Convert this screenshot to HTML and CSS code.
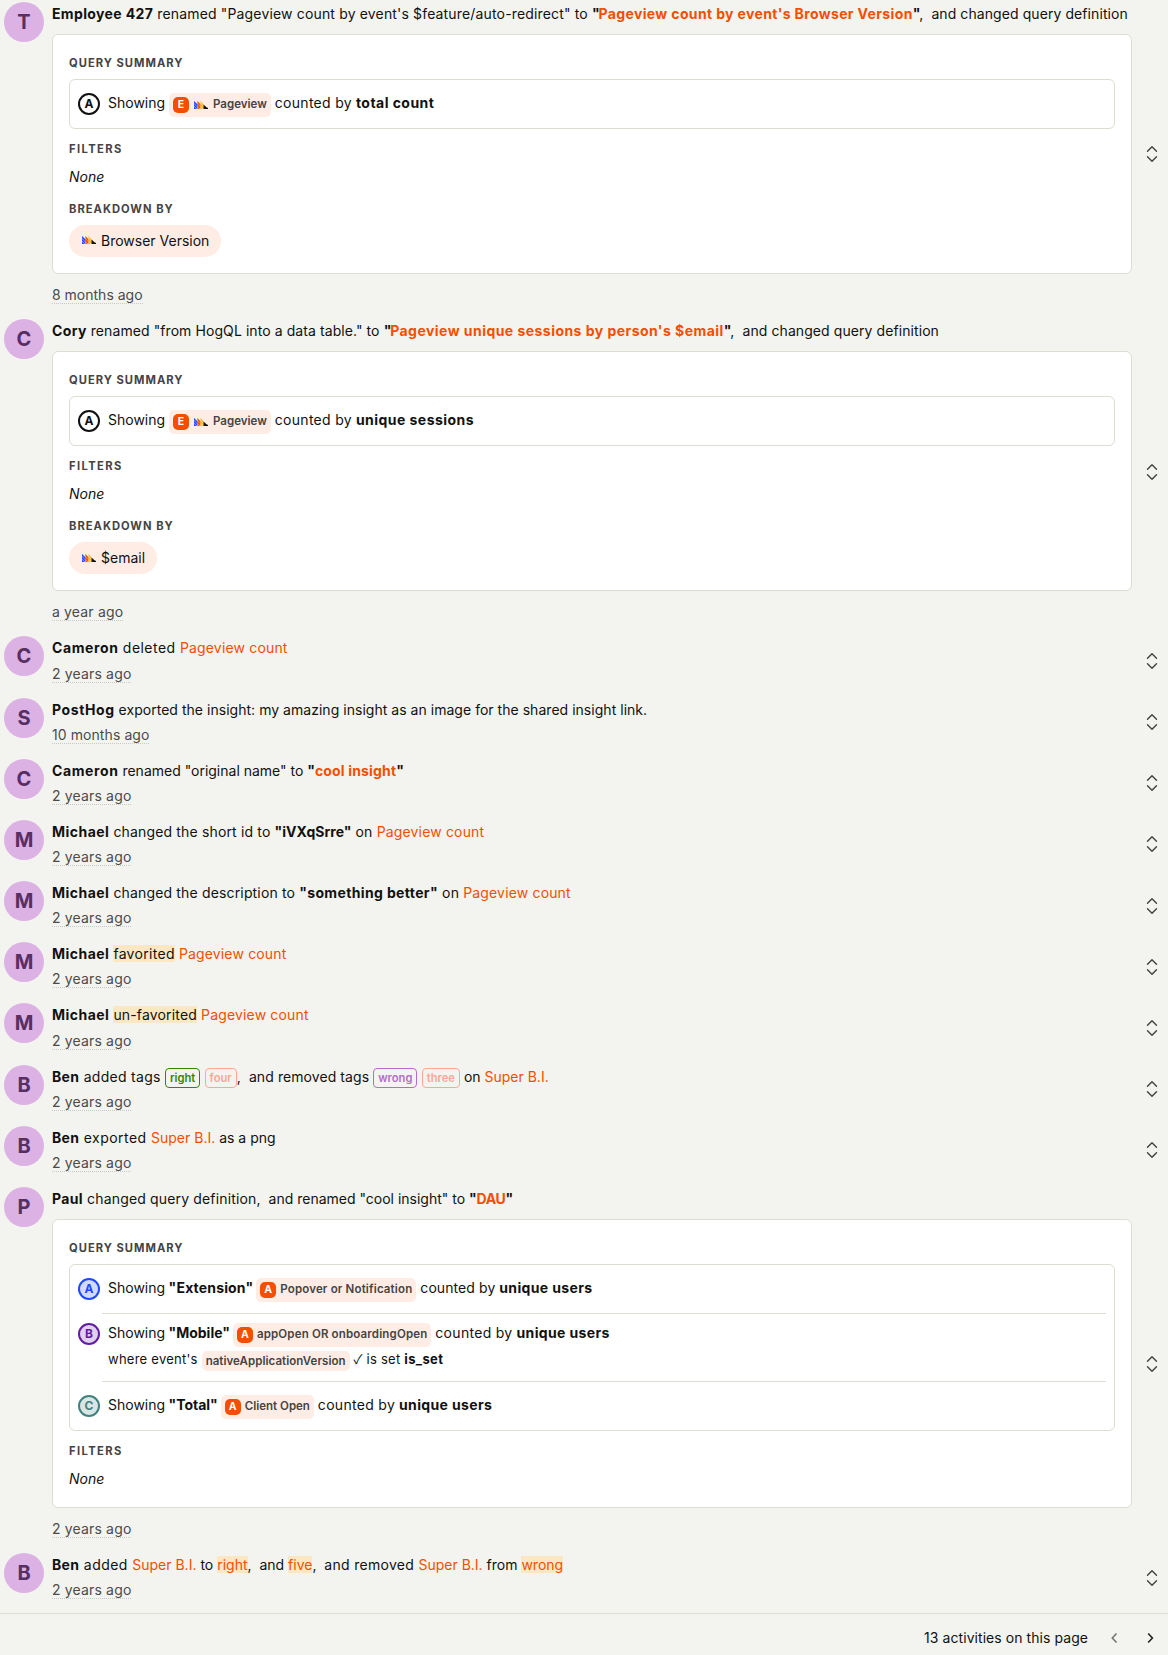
FILE: index.html
```html
<!DOCTYPE html>
<html lang="en">
<head>
<meta charset="utf-8">
<title>Activity</title>
<link rel="stylesheet" href="styles.css">
</head>
<body>
<svg class="defs" aria-hidden="true">
  <symbol id="hog" viewBox="0 0 50 28">
    <path fill="#1d4aff" d="M0 19 9 28H0zM0 9.500 12 21v7h-1L0 17.500zM0 0l13 12v8.500L0 8z"/>
    <path fill="#f54e00" d="M13 21.500 20 28h-7zM12 9.500l11 11V28h-1L12 19zM12 0l12 12v8.500L12 8z"/>
    <path fill="#f9bd2b" d="M24 21.500 31 28h-7zM23 9.500l11 11V28h-1L23 19zM23 0l11 12v8.500L23 8z"/>
    <path fill="#111" d="M34 12l9.500 9.500c1 1 3 2.500 6.500 2.500v4H34z"/>
  </symbol>
  <symbol id="expand" viewBox="0 0 24 24">
    <path fill="none" stroke="currentColor" stroke-width="1.700" stroke-linecap="round" stroke-linejoin="round" d="M6.600 8.800 12 3.400l5.400 5.400M6.600 15.200 12 20.600l5.400-5.400"/>
  </symbol>
</svg>
<main class="log">
  <article class="row">
    <div class="avatar">T</div>
    <div class="details">
      <div class="line loose"><b>Employee 427</b> renamed "Pageview count by event's $feature/auto-redirect" to <b class="quoted">"<a>Pageview count by event's Browser Version</a>"</b><span class="snug">,&nbsp; and changed query definition</span></div>
      <section class="card">
        <h5>Query summary</h5>
        <div class="series-box">
          <div class="series"><i class="badge">A</i><div class="series-line">Showing <span class="tag"><i class="kind">E</i><svg class="hog"><use href="#hog"/></svg>Pageview</span> <span class="airy">counted by</span> <b class="wide">total count</b></div></div>
        </div>
        <h5 class="wide">Filters</h5>
        <div class="none">None</div>
        <h5>Breakdown by</h5>
        <div class="pill"><svg class="hog"><use href="#hog"/></svg>Browser Version</div>
      </section>
      <div class="line"><time>8 months ago</time></div>
    </div>
    <svg class="expand"><use href="#expand"/></svg>
  </article>
  <article class="row">
    <div class="avatar">C</div>
    <div class="details">
      <div class="line snug"><b>Cory</b> renamed "from HogQL into a data table." to <b class="quoted wide">"<a>Pageview unique sessions by person's $email</a>"</b>,&nbsp; and changed query definition</div>
      <section class="card">
        <h5>Query summary</h5>
        <div class="series-box">
          <div class="series"><i class="badge">A</i><div class="series-line">Showing <span class="tag"><i class="kind">E</i><svg class="hog"><use href="#hog"/></svg>Pageview</span> <span class="airy">counted by</span> <b class="wide">unique sessions</b></div></div>
        </div>
        <h5 class="wide">Filters</h5>
        <div class="none">None</div>
        <h5>Breakdown by</h5>
        <div class="pill"><svg class="hog"><use href="#hog"/></svg>$email</div>
      </section>
      <div class="line"><time class="loose">a year ago</time></div>
    </div>
    <svg class="expand"><use href="#expand"/></svg>
  </article>
  <article class="row">
    <div class="avatar">C</div>
    <div class="details">
      <div class="line wide"><b class="wider">Cameron</b> deleted <a class="loose">Pageview count</a></div>
      <div class="line"><time class="loose">2 years ago</time></div>
    </div>
    <svg class="expand"><use href="#expand"/></svg>
  </article>
  <article class="row">
    <div class="avatar">S</div>
    <div class="details">
      <div class="line"><b class="wider">PostHog</b><span class="exported"> exported the insight: my amazing insight as an image for the shared insight link.</span></div>
      <div class="line"><time class="snug">10 months ago</time></div>
    </div>
    <svg class="expand"><use href="#expand"/></svg>
  </article>
  <article class="row">
    <div class="avatar">C</div>
    <div class="details">
      <div class="line"><b class="wider">Cameron</b> renamed "original name" to <b class="loose">"<a>cool insight</a>"</b></div>
      <div class="line"><time class="loose">2 years ago</time></div>
    </div>
    <svg class="expand"><use href="#expand"/></svg>
  </article>
  <article class="row">
    <div class="avatar">M</div>
    <div class="details">
      <div class="line loose"><b class="wide">Michael</b> changed the short id to <b class="normal">"iVXqSrre"</b> on <a>Pageview count</a></div>
      <div class="line"><time class="loose">2 years ago</time></div>
    </div>
    <svg class="expand"><use href="#expand"/></svg>
  </article>
  <article class="row">
    <div class="avatar">M</div>
    <div class="details">
      <div class="line loose"><b class="wide">Michael</b> changed the description to <b>"something better"</b> on <a>Pageview count</a></div>
      <div class="line"><time class="loose">2 years ago</time></div>
    </div>
    <svg class="expand"><use href="#expand"/></svg>
  </article>
  <article class="row">
    <div class="avatar">M</div>
    <div class="details">
      <div class="line loose"><b class="wide">Michael</b> <mark class="airy">favorited</mark> <a>Pageview count</a></div>
      <div class="line"><time class="loose">2 years ago</time></div>
    </div>
    <svg class="expand"><use href="#expand"/></svg>
  </article>
  <article class="row">
    <div class="avatar">M</div>
    <div class="details">
      <div class="line loose"><b class="wide">Michael</b> <mark>un-favorited</mark> <a>Pageview count</a></div>
      <div class="line"><time class="loose">2 years ago</time></div>
    </div>
    <svg class="expand"><use href="#expand"/></svg>
  </article>
  <article class="row">
    <div class="avatar">B</div>
    <div class="details">
      <div class="line airy"><b>Ben</b> added tags <span class="label green">right</span> <span class="label coral">four</span><span class="snug">,&nbsp; and removed tags </span><span class="label purple">wrong</span> <span class="label coral">three</span><span class="normal"> on <a>Super B.I.</a></span></div>
      <div class="line"><time class="loose">2 years ago</time></div>
    </div>
    <svg class="expand"><use href="#expand"/></svg>
  </article>
  <article class="row">
    <div class="avatar">B</div>
    <div class="details">
      <div class="line"><b>Ben</b><span class="wide"> exported </span><a>Super B.I.</a> as a png</div>
      <div class="line"><time class="loose">2 years ago</time></div>
    </div>
    <svg class="expand"><use href="#expand"/></svg>
  </article>
  <article class="row">
    <div class="avatar">P</div>
    <div class="details">
      <div class="line"><b>Paul</b><span class="loose"> changed query definition,</span>&nbsp; and renamed "cool insight" to <b class="tight">"<a>DAU</a>"</b></div>
      <section class="card tall">
        <h5>Query summary</h5>
        <div class="series-box">
          <div class="series"><i class="badge blue">A</i><div class="series-line">Showing<b class="name loose"> "Extension"</b> <span class="tag loose"><i class="kind">A</i>Popover or Notification</span> <span class="snug">counted by</span> <b>unique users</b></div></div>
          <hr>
          <div class="series filtered"><i class="badge violet">B</i><div>
            <div class="series-line">Showing<b class="name"> "Mobile"</b> <span class="tag loose"><i class="kind">A</i>appOpen OR onboardingOpen</span> <span class="airy">counted by</span> <b>unique users</b></div>
            <div class="where">where event's <span class="tag small">nativeApplicationVersion</span> <span class="check">✓</span> is set <b>is_set</b></div>
          </div></div>
          <hr>
          <div class="series"><i class="badge teal">C</i><div class="series-line">Showing<b class="name"> "Total"</b> <span class="tag"><i class="kind">A</i>Client Open</span> <span class="airy">counted by</span> <b>unique users</b></div></div>
        </div>
        <h5 class="wide">Filters</h5>
        <div class="none">None</div>
      </section>
      <div class="line"><time class="loose">2 years ago</time></div>
    </div>
    <svg class="expand"><use href="#expand"/></svg>
  </article>
  <article class="row">
    <div class="avatar">B</div>
    <div class="details">
      <div class="line"><b>Ben</b><span class="wide"> added </span><a>Super B.I.</a> to <mark><a>right</a></mark>,&nbsp; and <mark><a>five</a></mark>,&nbsp; <span class="airy">and removed </span><a>Super B.I.</a> from <mark><a>wrong</a></mark></div>
      <div class="line"><time class="loose">2 years ago</time></div>
    </div>
    <svg class="expand"><use href="#expand"/></svg>
  </article>
</main>
<footer class="pager">
  <span>13 activities on this page</span>
  <svg class="chev disabled" viewBox="0 0 16 16"><path d="M10.500 3.500 6.300 8l4.200 4.500"/></svg>
  <svg class="chev" viewBox="0 0 16 16"><path d="M6.200 3.500 10.400 8l-4.200 4.500"/></svg>
</footer>
</body>
</html>
```
FILE: styles.css
```css
* { box-sizing: border-box; }
body {
  margin: 0;
  background: #f3f4ef;
  color: #111;
  font: 14px/25.2px Inter, sans-serif;
}
b { font-weight: 700; letter-spacing: .36px; }
i { font-style: normal; }
a { color: #f54e00; }
.tight { letter-spacing: -.3px; }
.normal, .name { letter-spacing: 0; }
.snug { letter-spacing: .08px; }
.loose { letter-spacing: .16px; }
.airy { letter-spacing: .3px; }
.wide { letter-spacing: .46px; }
.wider { letter-spacing: .6px; }
.exported { letter-spacing: .03px; }
.quoted { letter-spacing: -1.200px; }
.quoted a { letter-spacing: .36px; }
.quoted.wide a { letter-spacing: .46px; }
.defs { position: absolute; width: 0; height: 0; }
.log {
  display: flex;
  flex-direction: column;
  gap: 10.8px;
  height: 1613px;
  padding: 2px 6px 0 4px;
}
.row { display: flex; flex: none; gap: 8px; }
.avatar {
  flex: none;
  width: 40px;
  height: 40px;
  border-radius: 50%;
  background: #dcb1e3;
  color: #572f63;
  font-size: 20px;
  font-weight: 700;
  line-height: 40px;
  text-align: center;
}
.details { flex: 1; min-width: 0; }
.line { height: 25.2px; line-height: 24.400px; white-space: nowrap; }
time { color: #4b4b4b; border-bottom: 1px dotted #c9cac2; }
mark { background: #fbe8c2; color: inherit; }
.expand { flex: none; width: 20px; height: 20px; align-self: center; margin: 0 0 1.400px 2px; color: #444; }

.card {
  height: 240px;
  margin: 7px 0 9px;
  padding: 16px;
  border: 1px solid #dcddd3;
  border-radius: 6px;
  background: #fff;
}
.card.tall { height: 289px; }
h5 {
  margin: 0;
  color: #444;
  font-size: 11.200px;
  font-weight: 700;
  letter-spacing: 1px;
  line-height: 24.400px;
  height: 24px;
  text-transform: uppercase;
}
h5.wide { letter-spacing: 1.400px; }
.series-box {
  margin: 4px 0 8px;
  padding: 0 8px;
  border: 1px solid #dcddd3;
  border-radius: 6px;
}
.series { display: flex; gap: 8px; height: 48px; padding-top: 13px; }
.series.filtered { height: 67px; padding-top: 9px; }
.series-line { height: 24px; line-height: 19.800px; white-space: nowrap; }
hr { height: 1px; margin: 0 0 0 24px; border: 0; background: #dcddd3; }
.badge {
  flex: none;
  width: 22px;
  height: 22px;
  border: 2px solid #111;
  border-radius: 50%;
  font-size: 12px;
  font-weight: 700;
  line-height: 18px;
  text-align: center;
}
.blue { border-color: #1d4aff; background: #d2dbff; color: #1d4aff; }
.violet { border-color: #621da6; background: #e0d2ed; color: #621da6; }
.teal { border-color: #42827e; background: #d9e6e5; color: #42827e; }
.name { margin-right: -1px; }
.tag {
  display: inline-flex;
  align-items: center;
  height: 24px;
  padding: 0 4px;
  border-radius: 5px;
  background: #ffece5;
  color: #444;
  font-size: 11.500px;
  font-weight: 600;
  vertical-align: top;
}
.tag.small { height: 20px; }
.kind {
  width: 16px;
  height: 16px;
  margin-right: 4px;
  border-radius: 5px;
  background: #f54e00;
  color: #fff;
  font-size: 10.500px;
  font-weight: 700;
  line-height: 16px;
  text-align: center;
}
.hog { width: 14px; height: 8px; margin: 0 5px 0 1px; }
.where { margin-top: 4px; font-size: 13px; letter-spacing: .25px; line-height: 17px; }
.where .tag { letter-spacing: .05px; }
.check { font-family: "Noto Sans CJK JP", sans-serif; line-height: 1; }
.none { height: 32px; margin-bottom: 4px; font-style: italic; line-height: 32px; }
.pill {
  display: inline-flex;
  align-items: center;
  height: 32px;
  margin-top: 4px;
  padding: 0 12px 1.400px;
  border-radius: 16px;
  background: #ffece5;
}
.label {
  display: inline-block;
  height: 20px;
  margin-top: 3px;
  padding: 0 4px;
  border: 1px solid;
  border-radius: 4px;
  font-size: 11.200px;
  font-weight: 600;
  letter-spacing: 0;
  line-height: 18px;
  vertical-align: top;
}
.green { color: #388600; }
.coral { color: #ffa599; }
.purple { color: #b56ccf; }
.pager {
  display: flex;
  align-items: center;
  justify-content: flex-end;
  height: 42px;
  padding: 7px 10px 0 0;
  border-top: 1px solid #dcddd3;
}
.pager span { margin-right: 18px; letter-spacing: .06px; }
.chev { width: 16px; height: 16px; fill: none; stroke: #222; stroke-width: 1.600; }
.chev + .chev { margin-left: 20px; }
.disabled { opacity: .6; }
```
